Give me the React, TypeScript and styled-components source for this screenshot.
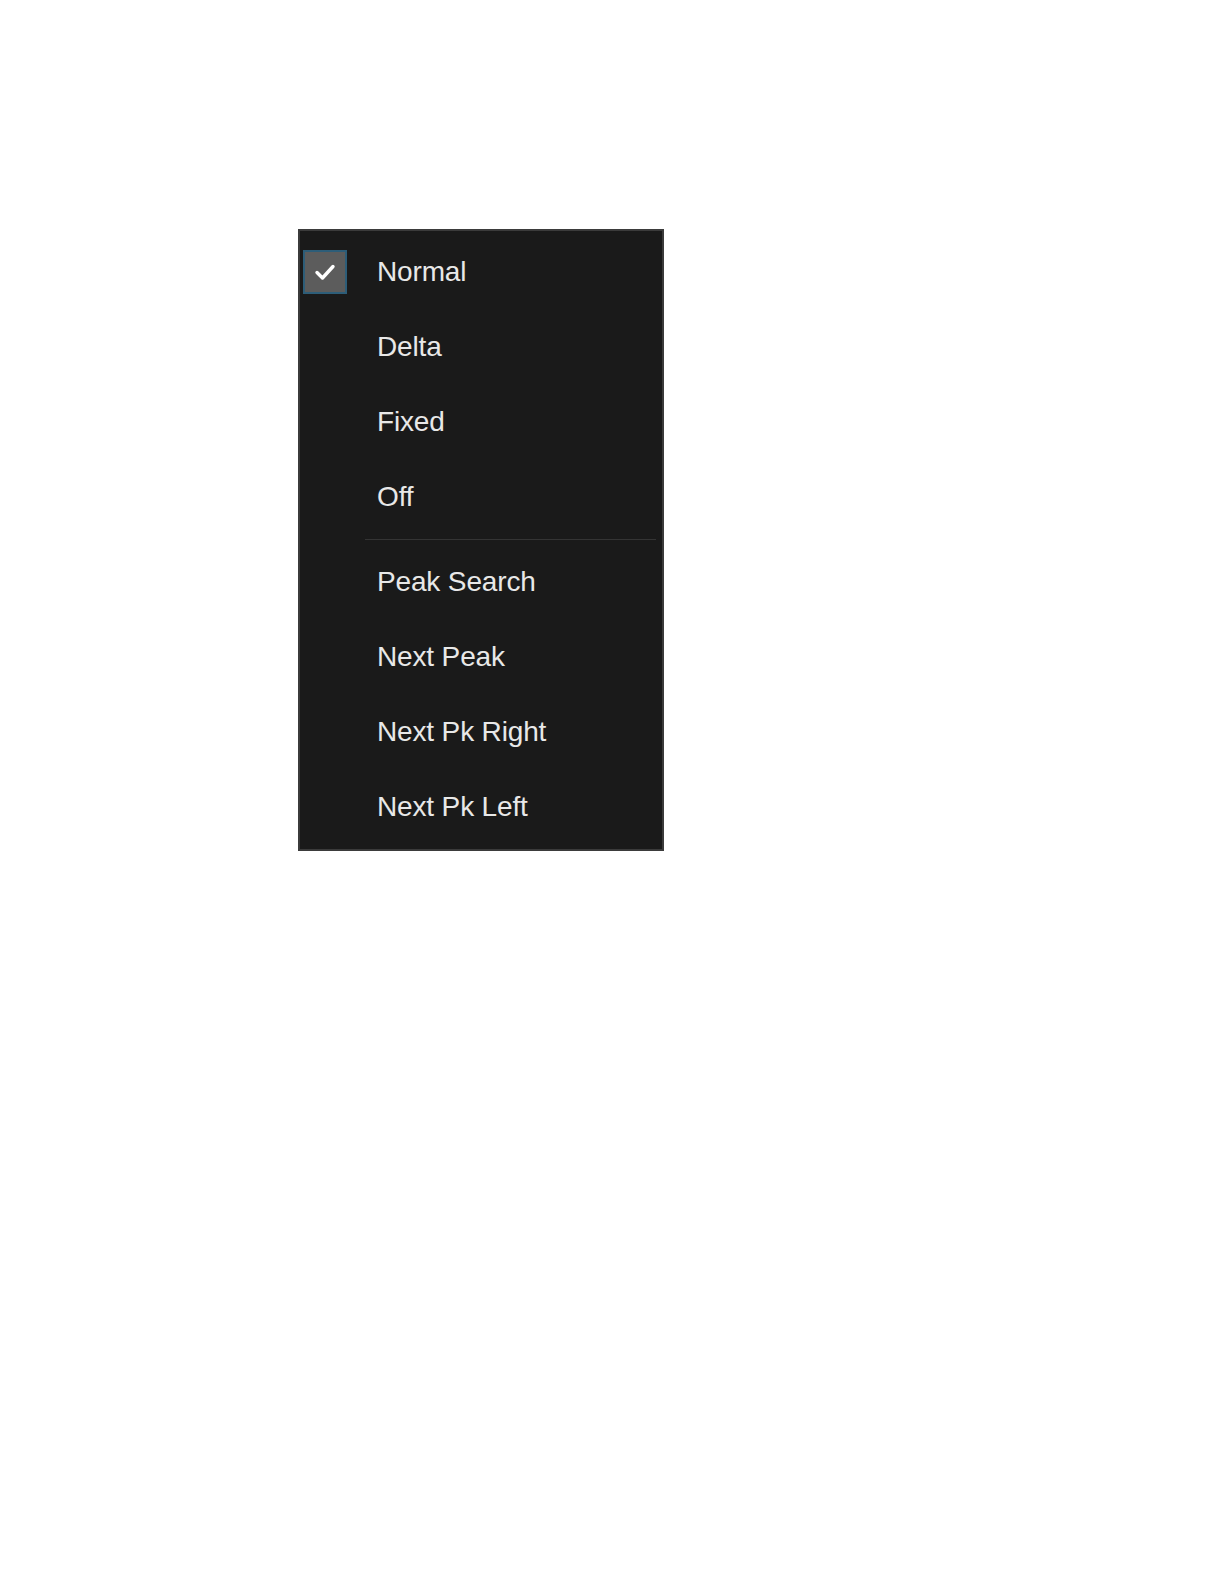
import styled, { createGlobalStyle } from "styled-components";

const GlobalStyle = createGlobalStyle`
  html, body {
    margin: 0;
    padding: 0;
    background: #fff;
  }
`;

const Page = styled.div`
  width: 1224px;
  height: 1584px;
  padding: 229px 0 0 298px;
  box-sizing: border-box;
`;

const Menu = styled.div`
  width: 366px;
  box-sizing: border-box;
  background: #1a1a1a;
  border: 2px solid #3b3b3b;
  padding: 3.5px 0 4.5px 0;
  display: flex;
  flex-direction: column;
`;

const Item = styled.div`
  height: 75px;
  display: flex;
  align-items: center;
  position: relative;
`;

const Check = styled.div`
  position: absolute;
  left: 3px;
  top: 50%;
  transform: translateY(-50%);
  width: 44px;
  height: 44px;
  box-sizing: border-box;
  background: #5c5c5c;
  border: 2px solid #2d5d78;
  display: flex;
  align-items: center;
  justify-content: center;
`;

const Label = styled.span`
  margin-left: 77px;
  font-family: "Liberation Sans", Arial, sans-serif;
  font-size: 28px;
  color: #e8e8e8;
  letter-spacing: -0.15px;
`;

const Separator = styled.div`
  height: 10px;
  display: flex;
  align-items: center;
  padding: 0 6px 0 65px;

  &::after {
    content: "";
    flex: 1;
    height: 1px;
    background: #343434;
  }
`;

const groups = [
  ["Normal", "Delta", "Fixed", "Off"],
  ["Peak Search", "Next Peak", "Next Pk Right", "Next Pk Left"],
];

const CheckMark = () => (
  <svg width="22" height="18" viewBox="0 0 22 18">
    <path
      d="M3 9.5 L8.5 15 L19 3.5"
      fill="none"
      stroke="#fff"
      strokeWidth="3.4"
      strokeLinecap="round"
      strokeLinejoin="round"
    />
  </svg>
);

const App: React.FC = () => {
  return (
    <>
      <GlobalStyle />
      <Page>
        <Menu>
          {groups.map((group, gi) => (
            <div key={gi}>
              {gi > 0 && <Separator />}
              {group.map((label) => (
                <Item key={label}>
                  {label === "Normal" && (
                    <Check>
                      <CheckMark />
                    </Check>
                  )}
                  <Label>{label}</Label>
                </Item>
              ))}
            </div>
          ))}
        </Menu>
      </Page>
    </>
  );
};

export default App;
